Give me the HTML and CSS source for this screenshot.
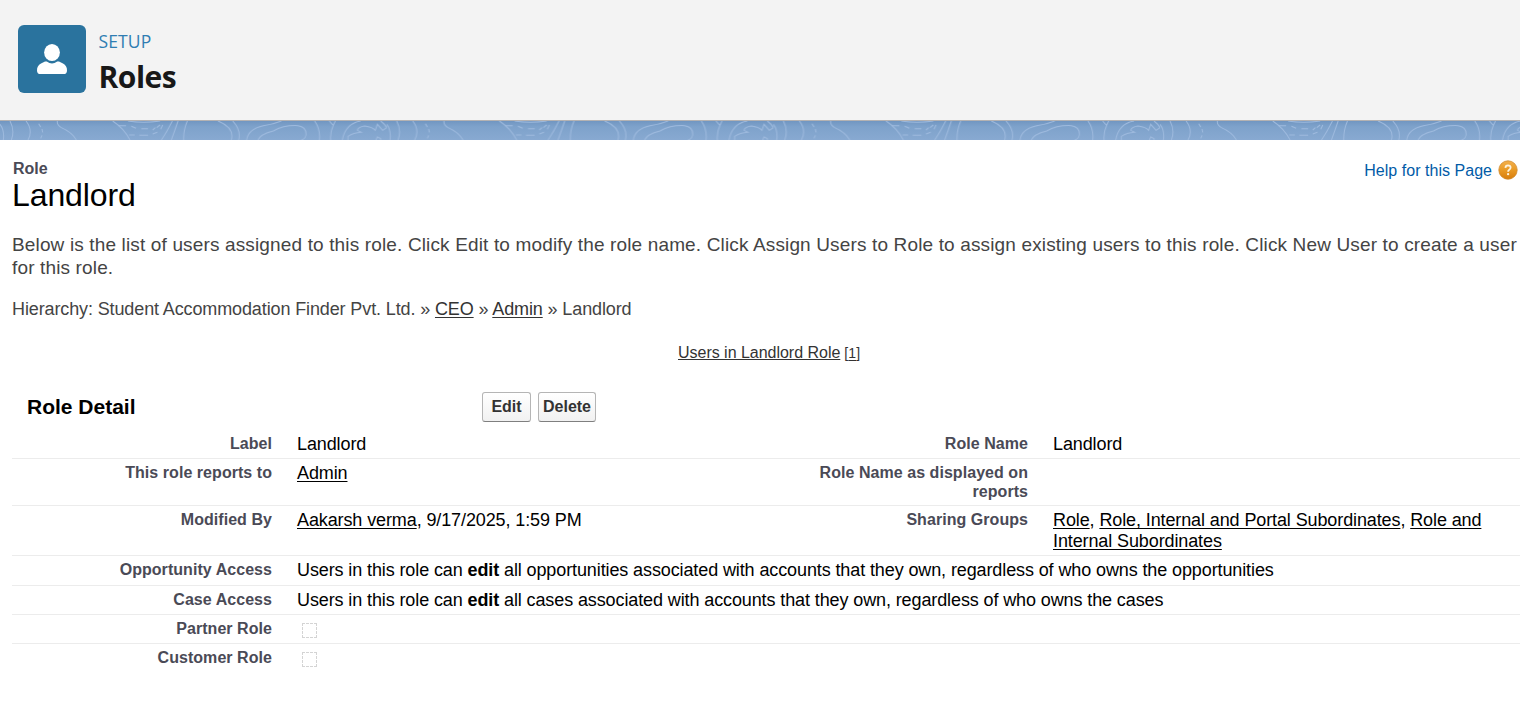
FILE: index.html
```html
<!DOCTYPE html>
<html lang="en">
<head>
<meta charset="utf-8">
<title>Roles</title>
<link rel="stylesheet" href="styles.css">
</head>
<body>
<header class="setup-header">
  <div class="setup-icon">
    <svg width="68" height="68" viewBox="0 0 68 68"><ellipse cx="34" cy="27.5" rx="7.9" ry="8.6" fill="#fff"/><path d="M28.8 36.6Q34 40.4 39.2 36.6Q40 36.2 41 36.6L45 38.6Q49.2 41 49 45.4Q49 49 45.5 49H22.5Q19 49 19 45.4Q18.800 41 23 38.600L27 36.600Q28 36.200 28.800 36.600Z" fill="#fff"/></svg>
  </div>
  <div class="setup-titles">
    <div class="eyebrow">SETUP</div>
    <h1 class="page-name">Roles</h1>
  </div>
</header>
<div class="band">
  <svg width="1520" height="19" viewBox="0 0 1520 19">
    <defs>
      <linearGradient id="sky" x1="0" y1="0" x2="0" y2="1"><stop offset="0" stop-color="#7196c1"/><stop offset=".3" stop-color="#7ea2cb"/><stop offset="1" stop-color="#88a9d1"/></linearGradient>
      <pattern id="topo" width="386.7" height="19" patternUnits="userSpaceOnUse">
        <g fill="none" stroke="#9ebade" stroke-width="3" transform="scale(.33333)">
          <path d="M0 10Q14 28 10 57M30 0Q45 28 34 57M78 0Q100 28 84 57"/>
          <path d="M116 8L122 18M126 24L128 34M126 43L122 52"/>
          <path d="M172 0Q170 12 184 20Q216 34 229 57M338 0Q372 22 390 57"/>
          <path d="M356 14H378M394 16L408 22M424 23H444M388 42H404M418 43H444M458 39L472 34M482 25L488 12M470 20L480 12M458 27L466 20M384 0Q430 8 480 0"/>
          <path d="M517 0Q500 34 484 57M534 0Q524 30 514 57M562 0Q550 28 551 57M654 0Q704 20 694 57M698 0Q724 28 716 57"/>
          <path d="M740 57Q744 24 790 14Q820 10 844 0M774 57Q780 40 820 30Q852 12 894 14Q920 18 918 42Q916 54 904 57M944 0Q962 26 958 57M988 0Q996 10 1000 13L1006 0M1000 13Q990 34 992 57"/>
          <path d="M1027 57Q1036 8 1082 0M1044 57V46Q1060 36 1084 34L1072 28Q1074 18 1094 15Q1118 18 1126 28L1132 10L1148 28L1160 20Q1177 38 1173 57M1128 57L1132 48L1142 53V57M1142 0Q1158 12 1162 24"/>
        </g>
      </pattern>
    </defs>
    <rect width="1520" height="19" fill="url(#sky)"/>
    <rect width="1520" height="19" fill="url(#topo)"/>
  </svg>
</div>
<main class="content">
  <div class="title-row">
    <div>
      <div class="type">Role</div>
      <h2 class="name">Landlord</h2>
    </div>
    <a class="help"><span>Help for this Page</span>
      <svg width="20" height="20" viewBox="0 0 20 20"><defs><linearGradient id="orb" x1="0" y1="0" x2="0" y2="1"><stop offset="0" stop-color="#f3b04c"/><stop offset=".5" stop-color="#e99a25"/><stop offset="1" stop-color="#d87d0c"/></linearGradient></defs><circle cx="10" cy="10" r="9.2" fill="url(#orb)" stroke="#d28a2c" stroke-width=".8"/><path d="M7.400 7.900Q7.500 5.400 10 5.400Q12.700 5.500 12.600 7.700Q12.500 9 11 9.900Q10.100 10.500 10.100 11.800" fill="none" stroke="#fdf3df" stroke-width="1.800"/><circle cx="10.100" cy="14.200" r="1.150" fill="#fdf3df"/></svg>
    </a>
  </div>
  <p class="intro">Below is the list of users assigned to this role. Click Edit to modify the role name. Click Assign Users to Role to assign existing users to this role. Click New User to create a user<br>for this role.</p>
  <p class="crumbs">Hierarchy: Student Accommodation Finder Pvt. Ltd. » <a>CEO</a> » <a>Admin</a> » Landlord</p>
  <div class="jump"><a>Users in Landlord Role</a> <span class="count">[<u>1</u>]</span></div>
  <div class="detail-head">
    <h3>Role Detail</h3>
    <button class="btn edit">Edit</button><button class="btn delete">Delete</button>
  </div>
  <div class="details">
    <div class="row r1"><div class="label">Label</div><div class="value">Landlord</div><div class="label">Role Name</div><div class="value">Landlord</div></div>
    <div class="row r2"><div class="label">This role reports to</div><div class="value"><a>Admin</a></div><div class="label">Role Name as displayed on<br>reports</div><div class="value"></div></div>
    <div class="row r3"><div class="label">Modified By</div><div class="value"><a>Aakarsh verma</a>, 9/17/2025, 1:59 PM</div><div class="label">Sharing Groups</div><div class="value"><a>Role</a>, <a>Role, Internal and Portal Subordinates</a>, <a>Role and</a><br><a>Internal Subordinates</a></div></div>
    <div class="row wide r4"><div class="label">Opportunity Access</div><div class="value">Users in this role can <b>edit</b> all opportunities associated with accounts that they own, regardless of who owns the opportunities</div></div>
    <div class="row wide r5"><div class="label">Case Access</div><div class="value">Users in this role can <b>edit</b> all cases associated with accounts that they own, regardless of who owns the cases</div></div>
    <div class="row wide r6"><div class="label">Partner Role</div><div class="value"><i class="check"></i></div></div>
    <div class="row wide r7"><div class="label">Customer Role</div><div class="value"><i class="check"></i></div></div>
  </div>
</main>
</body>
</html>
```
FILE: styles.css
```css
* { box-sizing: border-box; }
body { margin: 0; background: #fff; font-family: "Liberation Sans", Arial, sans-serif; color: #000; width: 1520px; height: 723px; overflow: hidden; }
h1, h2, h3, p { margin: 0; font-weight: normal; }
.setup-header { height: 121px; background: #f3f3f3; border-bottom: 1px solid #b4b2b2; display: flex; padding: 25px 0 0 18px; gap: 12px; font-family: "Open Sans", "Noto Sans", sans-serif; }
.setup-icon { width: 68px; height: 68px; border-radius: 6px; background: #2a739e; }
.setup-icon svg, .band svg { display: block; }
.eyebrow { font-size: 17.5px; line-height: 24px; letter-spacing: .15px; margin-top: 4px; padding-left: .4px; color: #2f7db2; }
.page-name { font-size: 30px; font-weight: 700; line-height: 40px; letter-spacing: -.5px; margin-top: 4px; padding-left: .5px; color: #181818; }
.band { height: 19px; }
.content { padding-left: 12px; }
.title-row { display: flex; justify-content: space-between; height: 80px; padding: 20px 2px 0 0; }
.type { font-size: 16px; font-weight: 700; line-height: 18px; color: #4a4a56; padding-left: 1px; }
.name { font-size: 32px; line-height: 34px; letter-spacing: -.1px; }
.help { display: flex; align-items: center; gap: 6px; height: 20px; font-size: 16px; letter-spacing: .03px; color: #015ba7; }
.help span { padding-top: 1px; }
.intro { font-size: 19px; line-height: 23px; letter-spacing: .145px; margin-top: 13px; color: #444; white-space: nowrap; }
.crumbs { font-size: 18px; line-height: 20px; letter-spacing: -.12px; margin-top: 20px; color: #444; }
a, u { text-decoration: underline; text-underline-offset: 2px; text-decoration-thickness: 1px; }
.help { text-decoration: none; }
.crumbs a, .jump { color: #333; }
.jump { display: flex; gap: 4px; align-items: baseline; height: 20px; padding-left: 666px; margin-top: 24px; font-size: 16px; line-height: 20px; letter-spacing: -.02px; }
.jump a { text-underline-offset: 1px; }
.count { font-size: 14px; letter-spacing: .1px; }
.detail-head { display: flex; margin-top: 29px; height: 38px; }
.detail-head h3 { font-size: 21px; font-weight: 700; line-height: 30px; width: 470px; padding-left: 15px; }
.btn { height: 30px; padding: 0 0 1px; border: 1px solid #b5b5b5; border-bottom-color: #7f7f7f; border-radius: 3px; background: linear-gradient(#fff, #f1f1f1); font: 700 16px "Liberation Sans", Arial, sans-serif; color: #333; }
.edit { width: 49px; margin-right: 7px; }
.delete { width: 58px; }
.row { display: grid; grid-template-columns: 260px 472px 259px 1fr; border-bottom: 1px solid #ececec; }
.row.wide { grid-template-columns: 260px 1fr; }
.row .label:nth-child(3) { padding-left: 40px; width: 284px; }
.row .value:nth-child(4) { padding-left: 50px; }
.label { font-size: 16px; font-weight: 700; line-height: 19px; letter-spacing: .05px; text-align: right; color: #4a4a56; padding-top: 4px; white-space: nowrap; }
.value { font-size: 18px; line-height: 21px; letter-spacing: -.11px; padding: 4px 0 0 25px; white-space: nowrap; }
.r1 { height: 29px; }
.r2 { height: 47px; }
.r3 { height: 50px; }
.r4 { height: 30px; }
.r5, .r6 { height: 29px; }
.r7 { height: 30px; border-bottom: 0; }
.check { display: block; width: 15px; height: 15px; margin: 4px 0 0 5px; border: 1px dashed #d4d4d4; }
```
